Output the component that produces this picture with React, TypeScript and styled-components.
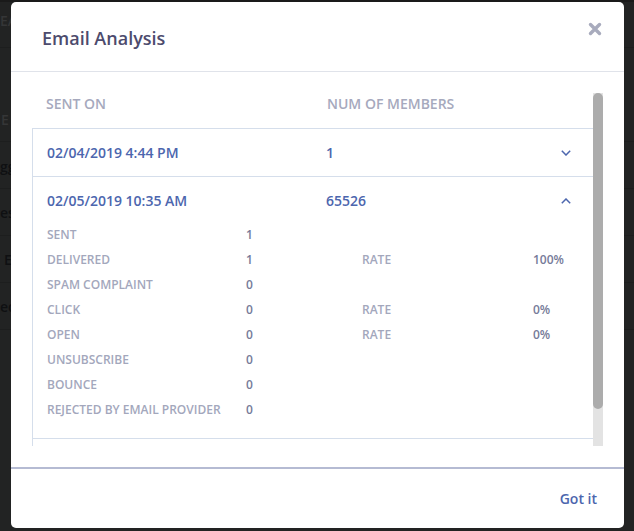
import React from 'react';
import styled, { createGlobalStyle } from 'styled-components';

const Global = createGlobalStyle`
  html, body { margin: 0; padding: 0; background: #222323; }
  body { font-family: "Open Sans", "Noto Sans", sans-serif; -webkit-font-smoothing: antialiased; }
  * { box-sizing: border-box; }
`;

const Page = styled.div`
  width: 634px;
  height: 531px;
  overflow: hidden;
  position: relative;
  background: #222323;
  border-top: 2px solid #1a1a1a;
`;

const BackdropRows = styled.div`
  position: absolute;
  inset: 0;
  font-size: 14px;
  font-weight: 600;
  color: #0f1012;
`;

const BackdropLine = styled.div<{ $top: number }>`
  position: absolute;
  left: 0;
  right: 0;
  top: ${p => p.$top}px;
  height: 1px;
  background: #1d1e1e;
`;

const BackdropText = styled.span<{ $top: number; $left: number; $dim?: boolean }>`
  position: absolute;
  top: ${p => p.$top}px;
  left: ${p => p.$left}px;
  color: ${p => (p.$dim ? '#353637' : '#0f1012')};
  white-space: nowrap;
`;

const Modal = styled.div`
  position: absolute;
  left: 11px;
  top: 0;
  width: 613px;
  height: 526px;
  background: #fff;
  border-radius: 5px;
  display: flex;
  flex-direction: column;
`;

const Header = styled.header`
  height: 70px;
  flex: none;
  display: flex;
  align-items: flex-start;
  justify-content: space-between;
  padding: 24px 22px 0 31px;
  border-bottom: 1px solid #e0e3ea;
`;

const Title = styled.h2`
  margin: 0;
  font-size: 18px;
  line-height: 24px;
  font-weight: 600;
  color: #4d4b6d;
`;

const Close = styled.button`
  border: 0;
  padding: 0;
  background: none;
  width: 14px;
  height: 14px;
  margin-top: -4px;
  display: block;
`;

const Body = styled.div`
  flex: none;
  height: 395px;
  display: flex;
  padding: 22px 21px 0 21px;
`;

const Content = styled.div`
  flex: 1;
  min-width: 0;
`;

const ColumnHead = styled.div`
  height: 34px;
  display: grid;
  grid-template-columns: 281px 1fr;
  padding-left: 14px;
  font-size: 14px;
  line-height: 20px;
  font-weight: 600;
  color: #a6a9bd;
`;

const Table = styled.div`
  border-left: 1px solid #d5deeb;
  border-top: 1px solid #d5deeb;
  height: 318px;
`;

const Row = styled.div<{ $open?: boolean }>`
  height: ${p => (p.$open ? 45 : 48)}px;
  padding-top: ${p => (p.$open ? 2 : 0)}px;
  display: grid;
  grid-template-columns: 279px 1fr 32px;
  align-items: center;
  padding-left: 14px;
  border-bottom: ${p => (p.$open ? 'none' : '1px solid #d5deeb')};
  font-size: 14px;
  font-weight: 600;
  color: #4c66ae;
`;

const Chevron = styled.svg`
  width: 10px;
  height: 6px;
  display: block;
`;

const Details = styled.div`
  height: 217px;
  padding: 0 0 0 14px;
  border-bottom: 1px solid #d5deeb;
`;

const Stat = styled.div`
  height: 25px;
  display: grid;
  grid-template-columns: 199px 116px 171px auto;
  align-items: center;
  font-size: 12px;
  font-weight: 600;
  justify-content: start;
`;

const Label = styled.span`
  color: #a3a7bc;
`;

const Value = styled.span`
  color: #767b99;
`;

const Scrollbar = styled.div`
  flex: none;
  width: 10px;
  height: 353px;
  margin-top: -1px;
  background: #e3e3e3;
`;

const Thumb = styled.div`
  width: 100%;
  height: 316px;
  background: #acacac;
  border-radius: 5px;
`;

const Footer = styled.footer`
  flex: 1;
  border-top: 2px solid #b5bbd3;
  display: flex;
  align-items: center;
  justify-content: flex-end;
  padding: 0 27px 0 0;
`;

const Action = styled.button`
  border: 0;
  background: none;
  padding: 0;
  font-family: inherit;
  font-size: 14px;
  font-weight: 600;
  color: #4c66ae;
`;

const stats: [string, string, string?, string?][] = [
  ['SENT', '1'],
  ['DELIVERED', '1', 'RATE', '100%'],
  ['SPAM COMPLAINT', '0'],
  ['CLICK', '0', 'RATE', '0%'],
  ['OPEN', '0', 'RATE', '0%'],
  ['UNSUBSCRIBE', '0'],
  ['BOUNCE', '0'],
  ['REJECTED BY EMAIL PROVIDER', '0'],
];

export default function App() {
  return (
    <Page>
      <Global />
      <BackdropRows>
        <BackdropText $top={9} $left={0} $dim>EA</BackdropText>
        <BackdropLine $top={45} />
        <BackdropText $top={108} $left={1} $dim>E</BackdropText>
        <BackdropLine $top={139} />
        <BackdropText $top={155} $left={0}>gg</BackdropText>
        <BackdropLine $top={186} />
        <BackdropText $top={201} $left={0}>es</BackdropText>
        <BackdropLine $top={233} />
        <BackdropText $top={248} $left={4}>E</BackdropText>
        <BackdropLine $top={280} />
        <BackdropText $top={295} $left={0}>ed</BackdropText>
        <BackdropLine $top={327} />
      </BackdropRows>
      <Modal>
        <Header>
          <Title>Email Analysis</Title>
          <Close aria-label="Close">
            <svg viewBox="0 0 14 14" width="14" height="14">
              <path d="M2.5 2.5 L11.5 11.5 M11.5 2.5 L2.5 11.5" stroke="#a8abbd" strokeWidth="3.4" strokeLinecap="round" />
            </svg>
          </Close>
        </Header>
        <Body>
          <Content>
            <ColumnHead>
              <span>SENT ON</span>
              <span>NUM OF MEMBERS</span>
            </ColumnHead>
            <Table>
              <Row>
                <span>02/04/2019 4:44 PM</span>
                <span>1</span>
                <Chevron viewBox="0 0 10 6">
                  <path d="M0.8 0.8 L5 5 L9.2 0.8" fill="none" stroke="#4c66ae" strokeWidth="1.5" />
                </Chevron>
              </Row>
              <Row $open>
                <span>02/05/2019 10:35 AM</span>
                <span>65526</span>
                <Chevron viewBox="0 0 10 6">
                  <path d="M0.8 5.2 L5 1 L9.2 5.2" fill="none" stroke="#4c66ae" strokeWidth="1.5" />
                </Chevron>
              </Row>
              <Details>
                {stats.map(([label, value, rate, pct]) => (
                  <Stat key={label}>
                    <Label>{label}</Label>
                    <Value>{value}</Value>
                    <Label>{rate}</Label>
                    <Value>{pct}</Value>
                  </Stat>
                ))}
              </Details>
            </Table>
          </Content>
          <Scrollbar>
            <Thumb />
          </Scrollbar>
        </Body>
        <Footer>
          <Action>Got it</Action>
        </Footer>
      </Modal>
    </Page>
  );
}
